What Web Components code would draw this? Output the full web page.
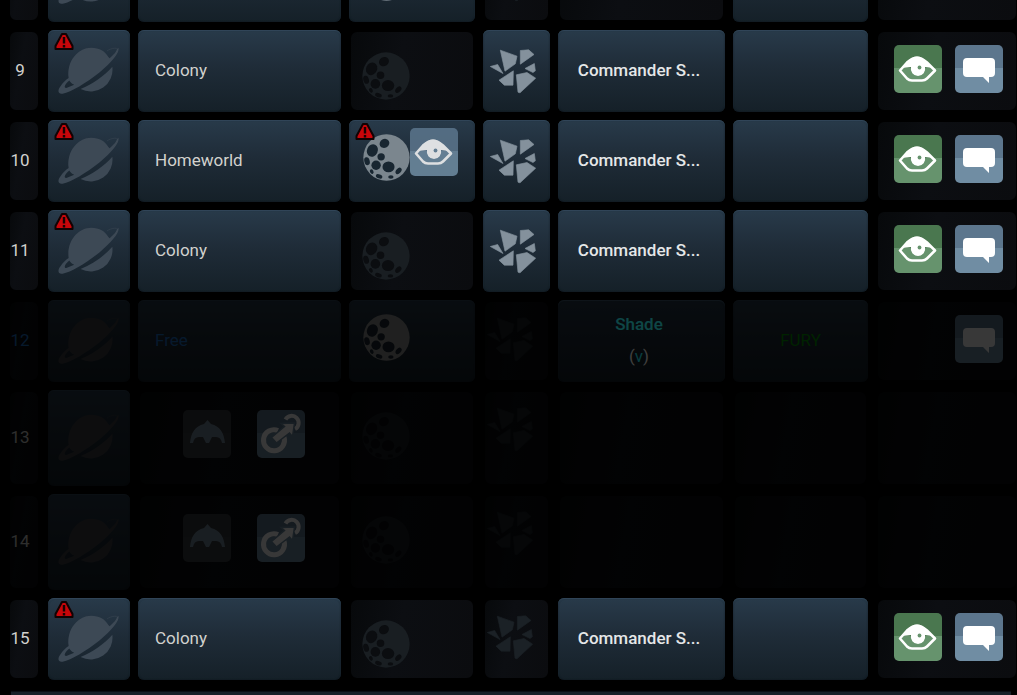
<!DOCTYPE html>
<html lang="en">
<head>
<meta charset="utf-8">
<title>Galaxy</title>
<style>
html,body{margin:0;background:#000;height:100%;overflow:hidden}
body{font-family:Roboto,"Liberation Sans",sans-serif;font-size:17px;line-height:32px;color:#d2d2ce}
</style>
</head>
<body>
<galaxy-view></galaxy-view>
<script>
const glyphs = {
  planet: ['174 136 188 148', `<g fill="currentColor"><path fill-rule="evenodd" d="M208 233C201 180 238 141 276 141C302 141 318 152 328 169L332 173C343 163 353 153 354 145L359 142C361 158 337 186 301 216C262 247 215 276 190 280C176 283 173 270 184 257C191 247 199 239 208 233ZM210 240C198 250 191 262 201 263L225 253C218 250 213 246 210 240Z"/><path d="M340 199A66 66 0 0 1 244 266C281 251 315 227 340 199Z"/></g><path d="M324 151C334 143 356 139 356 147C357 153 350 162 341 171" fill="none" stroke="currentColor" stroke-width="3" opacity=".5"/>`],
  moon: ['54 58 140 140', `<path fill="currentColor" fill-rule="evenodd" d="M55 128a69 69 0 1 0 138 0a69 69 0 1 0-138 0Z"/><g fill="var(--hole)"><ellipse cx="82" cy="107" rx="16" ry="19" transform="rotate(25 82 107)"/><ellipse cx="118" cy="86" rx="15" ry="13" transform="rotate(-30 118 86)"/><circle cx="108" cy="126" r="11"/><circle cx="93" cy="151" r="14"/><ellipse cx="130" cy="156" rx="18" ry="16"/><ellipse cx="66" cy="139" rx="8" ry="12" transform="rotate(-15 66 139)"/><ellipse cx="160" cy="168" rx="7" ry="11" transform="rotate(42 160 168)"/><ellipse cx="102" cy="184" rx="10" ry="6" transform="rotate(20 102 184)"/><ellipse cx="137" cy="186" rx="8" ry="5"/><ellipse cx="80" cy="170" rx="5" ry="7" transform="rotate(-30 80 170)"/></g>`],
  debris: ['450 150 138 134', `<path fill="currentColor" stroke="currentColor" stroke-width="2" stroke-linejoin="round" d="M481 153L531 171L526 194L495 216ZM541 154L566 152L582 166L541 195ZM555 208L583 193L586 215L579 220ZM529 227L561 220L587 237L540 281L534 279ZM477 243L520 215L519 258L493 258ZM451 202L473 196L489 223Z"/>`],
  eye: ['0 0 48 48', `<path d="M6 25.500L13 33.500Q15 35.500 18 35.500H28Q31 35.500 33 33.500L41 25.500L33 17.500Q23 8 13 17.500Z" fill="none" stroke="currentColor" stroke-width="2.600" stroke-linejoin="round"/><path fill="currentColor" d="M8 23L14 16C20 10 26 10 32 16L39 23L31 22A7.200 7.200 0 1 1 17 22Z"/><circle cx="25.500" cy="22.500" r="1.900" fill="var(--face)"/>`],
  message: ['0 0 48 48', `<path fill="currentColor" d="M12 13H36Q40 13 40 17V28Q40 32 36 32H34V38L28 32H12Q8 32 8 28V17Q8 13 12 13Z"/>`],
  colonize: ['0 0 48 48', `<path fill="currentColor" d="M24.500 10L28 14C37 16 41 23 42 33H39Q38 27 33 27L29 27L26 33H23L20 27L16 27Q11 27 10 33H7C8 23 12 16 21 14Z"/>`],
  link: ['0 0 48 48', `<g fill="none" stroke="currentColor"><path stroke-width="5" d="M21 20.500A10.500 10.500 0 1 0 27 27"/><path stroke-width="4" d="M28.500 9.500A7 7 0 1 1 38 19"/></g><path fill="currentColor" stroke="var(--face)" stroke-width="1.500" d="M14.500 27.500L27.500 16.500L24 13.500L37.500 13L35.500 26.500L32.500 23L19.500 33Z"/>`],
  warning: ['0 0 20 19', `<path d="M8 2H12L18.500 14V17H1.500V14Z" fill="#c8060a" stroke="#120203" stroke-width="2" stroke-linejoin="round"/><path d="M10 5V11.500M10 13V15.500" stroke="#190304" stroke-width="2.400"/>`]
};

class GameGlyph extends HTMLElement {
  connectedCallback() {
    if (this.shadowRoot) return;
    const [box, art] = glyphs[this.getAttribute('name')];
    this.attachShadow({mode: 'open'}).innerHTML = `
      <style>:host{display:block;--hole:#182631}svg{display:block;width:100%;height:100%}</style>
      <svg viewBox="${box}" aria-hidden="true">${art}</svg>`;
  }
}
customElements.define('game-glyph', GameGlyph);

class GameAction extends HTMLElement {
  connectedCallback() {
    if (this.shadowRoot) return;
    this.attachShadow({mode: 'open'}).innerHTML = `
      <style>
        :host{display:block;--top:#5c768d;--face:#708da3;--ink:#fff}
        :host([tone=green]){--top:#4a774f;--face:#66936d}
        :host([tone=grey]){--top:#34373b;--face:#383b3f;--ink:#748a9b}
        :host([tone=soft]){opacity:.85}
        button{display:block;width:48px;height:48px;padding:0;border:0;border-radius:5px;
          color:var(--ink);background:linear-gradient(var(--top) 48%,var(--face) 48%)}
        game-glyph{width:48px;height:48px}
      </style>
      <button type="button" aria-label="${this.getAttribute('label')}"><game-glyph name="${this.getAttribute('icon')}"></game-glyph></button>`;
  }
}
customElements.define('game-action', GameAction);

const rows = [
  {n:'', planet:1, nameLit:1, moon:1, allyLit:1},
  {n:9, planet:1, warn:1, name:'Colony', debris:1, player:'Commander S...', act:1},
  {n:10, planet:1, warn:1, name:'Homeworld', moon:2, debris:1, player:'Commander S...', act:1},
  {n:11, planet:1, warn:1, name:'Colony', debris:1, player:'Commander S...', act:1},
  {n:12, cls:'faded free', planet:1, name:'Free', moon:1, shade:1, act:2},
  {n:13, cls:'faded tall', planet:1, empty:1},
  {n:14, cls:'faded tall', planet:1, empty:1},
  {n:15, planet:1, warn:1, name:'Colony', player:'Commander S...', act:1}
];
const lit = on => on ? 'lit' : 'dim';
const action = (icon, label, tone) => `<game-action icon="${icon}" label="${label}" tone="${tone}"></game-action>`;
const alert = '<game-glyph class="warning" name="warning"></game-glyph>';

function rowMarkup(r) {
  let name = r.name ? `<span>${r.name}</span>` : '';
  if (r.empty) name = `<div class="choices">${action('colonize','Colonize','grey')}${action('link','Relocate','blue')}</div>`;
  const player = r.shade
    ? '<a href="#player" class="shade">Shade</a><br><span class="status">(<span class="vacation">v</span>)</span>'
    : r.player ? `<a href="#player">${r.player}</a>` : '';
  const actions = (r.act === 1 ? action('eye','Spy','green') : '') + (r.act ? action('message','Message','blue') : '');
  return `<tr class="${r.cls || ''}">
    <td class="index dim">${r.n}</td>
    <td class="planet lit">${r.warn ? alert : ''}<game-glyph name="planet"></game-glyph></td>
    <td class="name ${lit(r.name || r.nameLit)}">${name}</td>
    <td class="moon ${lit(r.moon)}">${r.moon === 2 ? alert : ''}<div class="orbit"><game-glyph name="moon"></game-glyph>${r.moon === 2 ? action('eye','Spy on moon','soft') : ''}</div></td>
    <td class="debris ${lit(r.debris)}"><game-glyph name="debris"></game-glyph></td>
    <td class="player ${lit(player)}">${player}</td>
    <td class="alliance ${lit(player || r.allyLit)}">${r.shade ? '<a href="#alliance">FURY</a>' : ''}</td>
    <td class="actions dim"><div class="buttons">${actions}</div></td>
  </tr>`;
}

class GalaxyView extends HTMLElement {
  connectedCallback() {
    this.attachShadow({mode: 'open'}).innerHTML = `
      <style>
        :host{display:block;height:100vh;overflow:hidden;background:#000}
        /* The list is scrolled part-way through its eighth row. */
        table{width:calc(100% + 9px);margin-top:-68px;table-layout:fixed;border-collapse:separate;border-spacing:8px}
        td{box-sizing:border-box;height:82px;padding:0;border-radius:6px;position:relative;vertical-align:middle}
        .tall td{height:96px}
        .lit{background:linear-gradient(#283a4a,#1f2c38 45%,#152028);box-shadow:inset 0 1px 1px #32485a,inset 0 0 2px #0c141b}
        .dim{border:2px solid #000;border-radius:8px;background:linear-gradient(100deg,#07090b,#0c0e12 40%,#0b0c0f)}
        .faded td{opacity:.22}
        .index{text-align:center;padding:0 8px 2px 0}
        .name.lit,.player,.alliance{padding-bottom:2px}
        .planet,.moon,.debris,.actions{vertical-align:top}
        .planet>game-glyph[name=planet]{width:63px;height:49px;margin:16px 0 0 9px;color:#3d4955}
        .tall .planet>game-glyph[name=planet]{margin-top:23px}
        .faded .planet>game-glyph[name=planet]{color:#3c3e42}
        .warning{position:absolute;left:6px;top:2px;width:20px;height:19px}
        .name.lit{padding-left:17px}
        .name.dim{vertical-align:top}
        .choices{display:flex;gap:26px;padding:18px 0 0 43px}
        .orbit{display:flex;align-items:flex-start;padding:8px 0 0 14px}
        .orbit>game-glyph{width:47px;height:47px;margin-top:6px;color:#7b868e}
        .faded .lit .orbit>game-glyph{color:#929290;--hole:#1b2832}
        .dim .orbit{padding:6px 0 0 11px}
        .dim .orbit>game-glyph{width:48px;height:48px;margin-top:14px;color:#191e22;--hole:#0b0d10}
        .debris>game-glyph{width:46px;height:45px;margin:19px 0 0 7px;color:#84919c}
        .debris.dim>game-glyph{margin:15px 0 0 2px;color:#1b2126}
        .player{text-align:center;padding-right:5px}
        .alliance{text-align:center}
        a{text-decoration:none;font-weight:500;color:#e5e7e8}
        .free .player{opacity:.3;background:linear-gradient(#1c2a36,#16202a 45%,#10181e)}
        .player a.shade{color:#30e8e8}
        .vacation{color:#20c8d0}
        .alliance a{font-weight:400;color:#009a00}
        .free .index,.free .name{color:#1e72c8}
        .buttons{display:flex;gap:13px;justify-content:flex-end;padding:13px 13px 0 0}
        .next{height:40px;margin:4px 6px 0 11px;background:#172129;box-shadow:0 -1px 1px #0a1015}
      </style>
      <table>
        <colgroup><col style="width:32px"><col style="width:82px"><col><col style="width:126px"><col style="width:67px"><col style="width:167px"><col style="width:135px"><col style="width:142px"></colgroup>
        <tbody>${rows.map(rowMarkup).join('')}</tbody>
      </table>
      <div class="next"></div>`;
  }
}
customElements.define('galaxy-view', GalaxyView);
</script>
</body>
</html>
